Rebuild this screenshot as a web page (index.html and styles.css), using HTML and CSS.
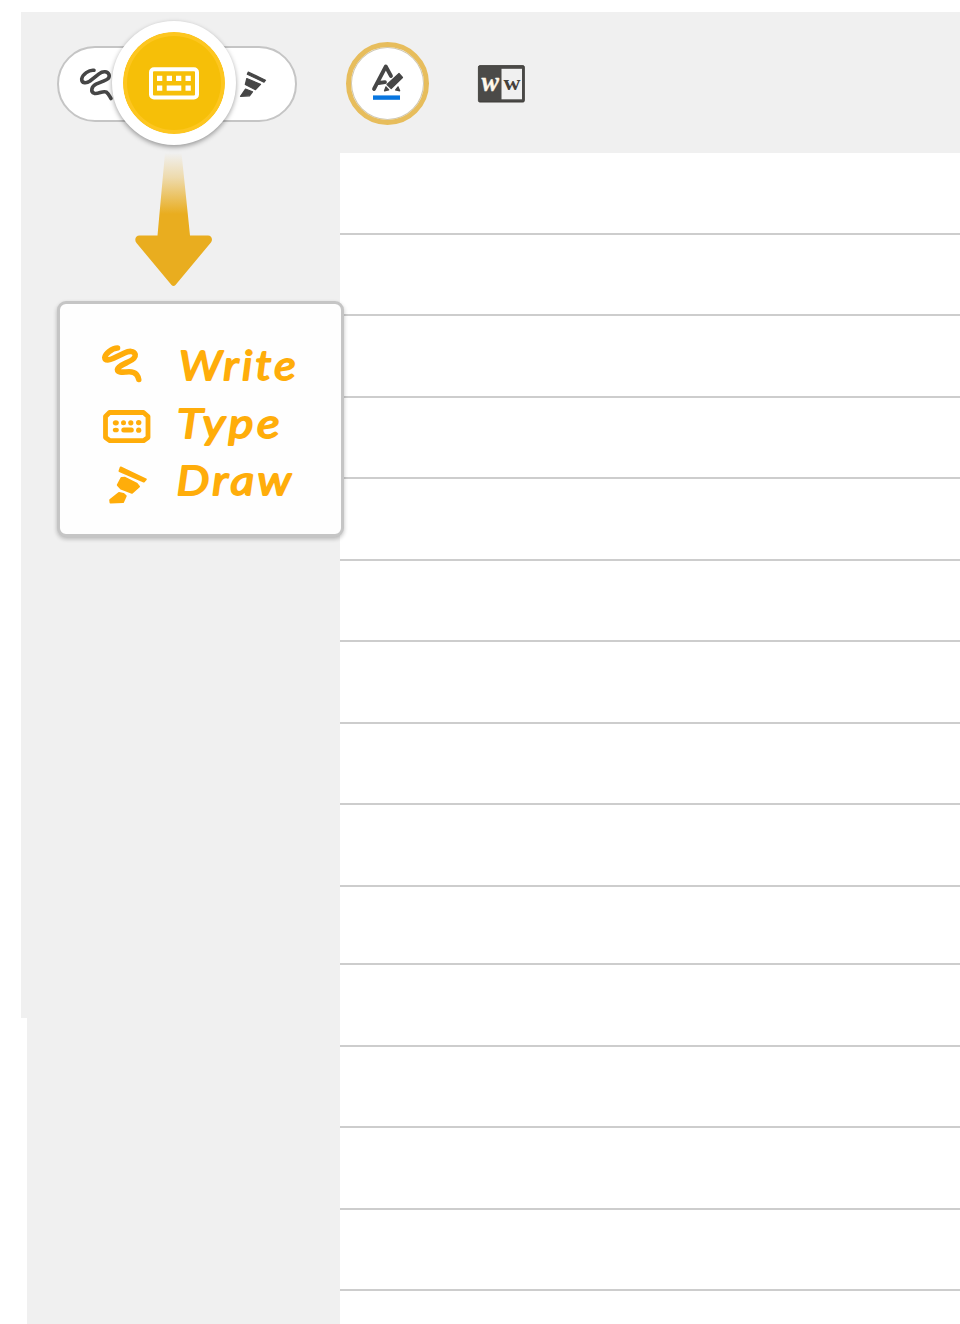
FILE: index.html
```html
<!DOCTYPE html>
<html lang="en">
<head>
<meta charset="utf-8">
<title>Note editor</title>
<link rel="stylesheet" href="styles.css">
</head>
<body>
<div class="app">
  <header class="toolbar">
    <div class="modes">
      <svg class="mode-write" viewBox="78 64 36 40"><path class="line" d="M94 70.300C89 69.500 82.500 74.500 81.700 79C81.500 83.500 86.500 83.500 90 81L99 73.800C103 70.700 107.500 71.200 109 74.500C110 78 107.500 79.300 104 80.800L96 84.200C91.500 86.500 90 92 94.500 93.400C98.500 94.300 103 90.300 106.500 92.200C108.600 93.700 109.500 96 111 98.500"/></svg>
      <div class="mode-active">
        <svg viewBox="148 66 52 35"><rect class="frame" x="151" y="69.2" width="46" height="28.3" rx="3"/><path class="keys" d="M157 75.7h5.3v5.3H157zM166.7 75.7h5.3v5.3h-5.3zM176 75.7h5.3v5.3H176zM185.5 75.7h5.3v5.3h-5.3zM157 85.5h5.3v5.3H157zM166.7 85.5h14.6v5.3h-14.6zM185.5 85.5h5.3v5.3h-5.3z"/></svg>
      </div>
      <svg class="mode-draw" viewBox="238 69 30 30"><path d="M248.300 72L247.300 74.200L264 82.200L265.500 80.200ZM246.800 78.500L245.300 84.500L255.500 89.700L260.500 84.300ZM245.500 89L240.500 96.300L249.500 95.800L252.500 91.800Z"/></svg>
    </div>
    <div class="format">
      <svg viewBox="370 62 36 40"><path class="letter" d="M374 89L385.800 66.500L391 76M378.500 83L385 82.200"/><path class="pen" d="M387 84.500L399 73.500L402.500 77.500L391.200 88.500ZM386 86.800L388.800 89.800L384.500 90.800ZM395.500 90L398 86.800L399.700 90.800Z"/><path class="swatch" d="M373 95.400h27v4.400h-27z"/></svg>
    </div>
    <svg class="convert" viewBox="477 64 50 40"><rect class="case" x="478.400" y="65.600" width="46" height="36.500" rx="1.500"/><path class="page" d="M501.500 68.800h20.500v30.500h-20.500z"/><text class="script-w" x="481.500" y="91" textLength="17.500" lengthAdjust="spacingAndGlyphs">w</text><text class="print-w" x="503.500" y="89.700" textLength="17" lengthAdjust="spacingAndGlyphs">w</text></svg>
  </header>
  <main class="workspace">
    <aside class="sidebar">
      <svg class="arrow" viewBox="134 153 80 134"><defs><linearGradient id="fade" x1="0" y1="153" x2="0" y2="214" gradientUnits="userSpaceOnUse"><stop offset="0" stop-color="#e9ad1f" stop-opacity="0"/><stop offset=".4" stop-color="#e9ad1f" stop-opacity=".32"/><stop offset="1" stop-color="#e9ad1f"/></linearGradient></defs><path fill="url(#fade)" d="M165 153h16.5L190 235.5h18c4 0 5.200 4.500 2.500 7.500L175.500 285q-2 2-4 0L136.500 243c-2.500-3-1-7.500 3-7.500H157.500Z"/></svg>
      <ul class="legend">
        <li><svg class="legend-icon" viewBox="98 340 60 58"><path class="line" d="M117.500 348C112 348 105 354 104.800 357.500C105 361 110 360 113.500 358.300L124.500 353C129 350.800 134 350.500 135.200 354.500C135.800 358.500 131 360.800 127.500 362.300C124 364 118 366.500 117.500 369.500C117.500 372.500 122 372.200 126 372C130 371.500 134 371.500 136.500 374.500C138 376.500 138.500 378 138.700 379.500"/></svg><svg class="word" viewBox="170 340 140 58"><text x="179" y="380" textLength="120" lengthAdjust="spacingAndGlyphs">Write</text></svg></li>
        <li><svg class="legend-icon" viewBox="98 398 60 58"><path class="frame" d="M109.500 412.500H143.500L148 416.500V437.500L143.500 440.700H110L105.500 437.500V416.500Z"/><ellipse cx="115.800" cy="422.800" rx="3" ry="2.600"/><circle cx="123.500" cy="422.800" r="2.500"/><circle cx="130.800" cy="422.800" r="2.600"/><circle cx="138.700" cy="422.600" r="2.700"/><ellipse cx="115.800" cy="430" rx="3" ry="2.300"/><rect x="121.300" y="427.400" width="12.500" height="5.200" rx="2.500"/><circle cx="138.700" cy="430.200" r="2.600"/></svg><svg class="word" viewBox="170 398 140 58"><text x="177" y="437.500" textLength="106" lengthAdjust="spacingAndGlyphs">Type</text></svg></li>
        <li><svg class="legend-icon" viewBox="98 456 60 58"><path class="soft" d="M120.700 467.500L119.500 471L143.800 481.500L145.800 479.300ZM121.500 478L117.800 485L121 488.500L132 492.800L139 486.500L137 484L125 477.800ZM119 493L110.200 500L110.500 502.500L123 502L125.700 496L123.500 494Z"/></svg><svg class="word" viewBox="170 456 140 58"><text x="176.500" y="494.500" textLength="118" lengthAdjust="spacingAndGlyphs">Draw</text></svg></li>
      </ul>
    </aside>
    <section class="paper">
      <i></i><i></i><i></i><i></i><i></i><i></i><i></i><i></i><i></i><i></i><i></i><i></i><i></i><i></i>
    </section>
  </main>
</div>
</body>
</html>
```

FILE: styles.css
```css
* { box-sizing: border-box; }
body { margin: 0; background: #fff; }
svg { display: block; flex: none; }
.app { height: 1324px; padding: 12px 0 0 21px; overflow: hidden; display: flex; flex-direction: column; }

.toolbar { flex: none; height: 141px; background: #f0f0f0; display: flex; align-items: flex-start; padding-left: 36px; }
.modes { position: relative; z-index: 1; flex: none; width: 240px; height: 76px; margin-top: 34px; border: 2px solid #c5c5c5; border-radius: 39px; background: #fff; display: flex; justify-content: space-between; padding: 0 27px 0 19px; }
.mode-write { width: 36px; height: 40px; margin-top: 16px; }
.mode-write .line { fill: none; stroke: #464646; stroke-width: 3.6; stroke-linecap: round; }
.mode-draw { width: 30px; height: 30px; margin-top: 21px; }
.mode-draw path { fill: #464646; stroke: #464646; stroke-width: 1.2; stroke-linejoin: round; }
.mode-active { position: absolute; left: 53px; top: -27px; width: 124px; height: 124px; border: 11px solid #fff; border-radius: 50%; background: #f6bf08 padding-box; box-shadow: inset 0 0 0 4px #fdc620, 0 2px 5px rgba(0,0,0,.38); display: flex; align-items: center; justify-content: center; }
.mode-active svg { width: 52px; height: 35px; }
.mode-active .frame { fill: none; stroke: #fff; stroke-width: 4; }
.mode-active .keys { fill: #fff; }

.format { flex: none; width: 83px; height: 83px; margin: 30px 0 0 49px; border: 5px solid #e7bd5c; border-radius: 50%; background: #fff; box-shadow: inset 0 0 0 1px #cfc8b4; padding: 15px 0 0 19px; }
.format svg { width: 36px; height: 40px; }
.letter { fill: none; stroke: #464646; stroke-width: 3.8; stroke-linecap: round; stroke-linejoin: round; }
.pen { fill: #464646; stroke: #464646; stroke-width: 1.2; stroke-linejoin: round; }
.swatch { fill: #0876e0; }
.convert { width: 50px; height: 40px; margin: 52px 0 0 48px; }
.case { fill: #4b4a48; stroke: #353330; stroke-width: .8; }
.page { fill: #f0f0f0; }
.script-w { font: italic bold 27px "Liberation Serif", serif; fill: #fff8eb; stroke: #fff8eb; stroke-width: .4; }
.print-w { font: bold 22px "Liberation Serif", serif; fill: #44403a; }

.workspace { flex: 1; display: flex; }
.sidebar { position: relative; z-index: 1; flex: none; width: 319px; background: linear-gradient(#f0f0f0, #f0f0f0) 0 0 / 100% 865px no-repeat, linear-gradient(#f0f0f0, #f0f0f0) 6px 0 / 313px 100% no-repeat; }
.arrow { width: 80px; height: 134px; margin-left: 113px; }
.legend { list-style: none; width: 287px; height: 236px; margin: 14px 0 0 36px; padding: 36px 0 0 38px; border: 3px solid #c5c5c5; border-radius: 9px; background: #fefefe; box-shadow: 0 2px 4px rgba(0,0,0,.24); }
.legend li { display: flex; height: 58px; }
.legend-icon { width: 60px; height: 58px; fill: #ffad0a; }
.legend-icon .line { fill: none; stroke: #ffad0a; stroke-width: 5.6; stroke-linecap: round; stroke-linejoin: round; }
.legend-icon .frame { fill: none; stroke: #ffad0a; stroke-width: 4.8; stroke-linejoin: round; }
.legend-icon .soft { stroke: #ffad0a; stroke-width: 2; stroke-linejoin: round; }
.word { width: 140px; height: 58px; margin-left: 12px; overflow: visible; }
.word text { font: italic 400 41px Lato, sans-serif; letter-spacing: 3px; fill: #ffad0a; stroke: #ffad0a; stroke-width: 1.8; stroke-linejoin: round; }

.paper { flex: 1; background: #fff; }
.paper i { display: block; height: 82px; border-bottom: 2px solid #cdcdcd; }
.paper i:nth-child(even) { height: 81px; }
.paper i:nth-child(10) { height: 78px; }
```
